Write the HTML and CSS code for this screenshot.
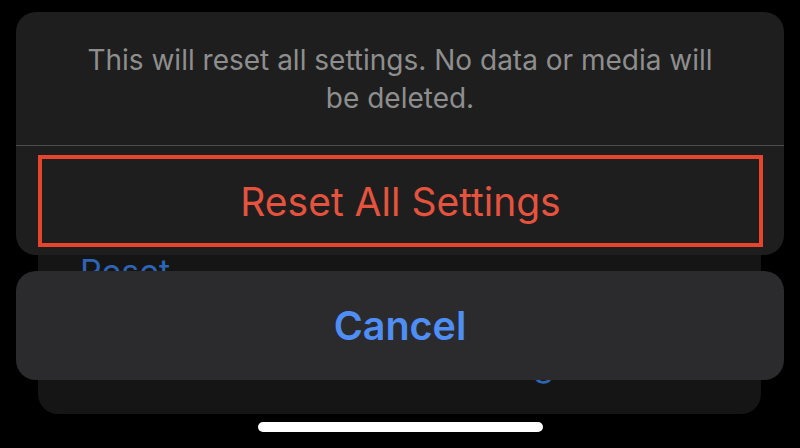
FILE: index.html
```html
<!DOCTYPE html>
<html>
<head>
<meta charset="utf-8">
<link rel="stylesheet" href="styles.css">
</head>
<body>
<div class="screen">
  <div class="bg-card">
    <div class="bg-title">Reset</div>
    <div class="bg-erase">Erase All Content and Settings</div>
  </div>
  <div class="sheet">
    <div class="msg">This will reset all settings. No data or media will be deleted.</div>
    <div class="action">
      <div class="action-box">Reset All Settings</div>
    </div>
  </div>
  <div class="cancel">Cancel</div>
  <div class="home"></div>
</div>
</body>
</html>
```
FILE: styles.css
```css
html, body {
  margin: 0;
  background: #000;
}
body {
  width: 800px;
  height: 448px;
  overflow: hidden;
  font-family: Inter, "Liberation Sans", sans-serif;
}
.screen {
  position: relative;
  height: 448px;
  box-sizing: border-box;
  padding: 12px 16px 0;
  display: flex;
  flex-direction: column;
}
.bg-card {
  position: absolute;
  left: 38px;
  top: 150px;
  width: 723px;
  height: 264px;
  background: #151515;
  border-radius: 20px;
  display: flex;
  flex-direction: column;
  overflow: hidden;
}
.bg-title {
  margin: 102px 0 0 42px;
  color: #2d64b5;
  font-size: 34px;
  line-height: 40px;
}
.bg-erase {
  margin: 51px 0 0 35px;
  color: #2d64b5;
  font-size: 35px;
  line-height: 40px;
}
.sheet {
  position: relative;
  z-index: 1;
  background: #1e1e1e;
  border-radius: 20px;
}
.msg {
  height: 134px;
  box-sizing: border-box;
  padding: 29px 64px 0;
  text-align: center;
  color: #8e8e8e;
  font-size: 28px;
  line-height: 38px;
  border-bottom: 1px solid #4b4b4b;
}
.action {
  height: 109px;
  box-sizing: border-box;
  padding: 9px 21px 8px 22px;
  display: flex;
}
.action-box {
  flex: 1;
  border: 4px solid #e6452d;
  display: flex;
  align-items: center;
  justify-content: center;
  color: #e5533f;
  font-size: 39px;
}
.cancel {
  position: relative;
  z-index: 1;
  margin-top: 16px;
  height: 109px;
  background: #2b2b2d;
  border-radius: 20px;
  display: flex;
  align-items: center;
  justify-content: center;
  color: #4f8ef5;
  font-size: 39.5px;
  font-weight: 600;
}
.home {
  align-self: center;
  margin-top: 42px;
  width: 285px;
  height: 10px;
  border-radius: 5px;
  background: #fff;
}
```
